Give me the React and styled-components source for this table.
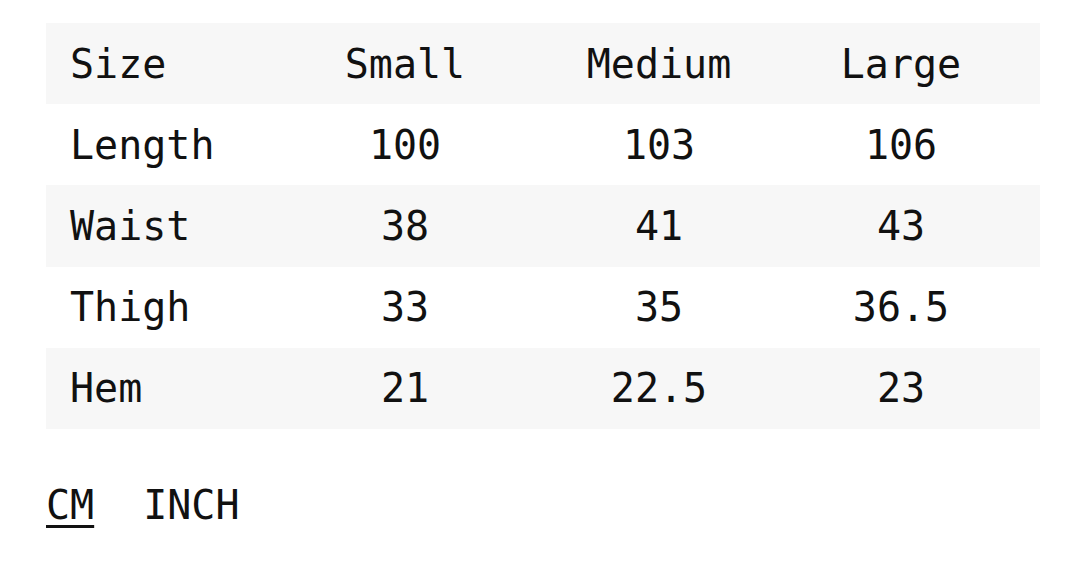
import React from "react";
import styled, { createGlobalStyle } from "styled-components";

const Global = createGlobalStyle`
  html, body { margin: 0; padding: 0; background: #ffffff; }
  body { font-family: "DejaVu Sans Mono", "Liberation Mono", monospace; color: #111111; }
`;

const Page = styled.div`
  padding: 23px 40px 0 46px;
`;

const Table = styled.div`
  display: flex;
  flex-direction: column;
  width: 994px;
`;

const Row = styled.div`
  display: grid;
  grid-template-columns: 208px 302px 206px 278px;
  height: 81.2px;
  align-items: center;
  background: ${(p) => (p.$shaded ? "#f7f7f7" : "#ffffff")};
`;

const Label = styled.div`
  padding-left: 24px;
  font-size: 40px;
  line-height: 48px;
  white-space: nowrap;
`;

const Cell = styled.div`
  text-align: center;
  font-size: 40px;
  line-height: 48px;
  white-space: nowrap;
`;

const Units = styled.div`
  display: flex;
  gap: 49px;
  margin-top: 52px;
`;

const Unit = styled.span`
  font-size: 40px;
  line-height: 48px;
  color: #111111;
  text-decoration: ${(p) => (p.$active ? "underline" : "none")};
  text-decoration-thickness: 2.5px;
  text-underline-offset: 6px;
  cursor: pointer;
`;

const rows = [
  ["Size", "Small", "Medium", "Large"],
  ["Length", "100", "103", "106"],
  ["Waist", "38", "41", "43"],
  ["Thigh", "33", "35", "36.5"],
  ["Hem", "21", "22.5", "23"],
];

export default function App() {
  return (
    <Page>
      <Global />
      <Table>
        {rows.map((r, i) => (
          <Row key={r[0]} $shaded={i % 2 === 0}>
            <Label>{r[0]}</Label>
            {r.slice(1).map((c, j) => (
              <Cell key={j}>{c}</Cell>
            ))}
          </Row>
        ))}
      </Table>
      <Units>
        <Unit $active>CM</Unit>
        <Unit>INCH</Unit>
      </Units>
    </Page>
  );
}
